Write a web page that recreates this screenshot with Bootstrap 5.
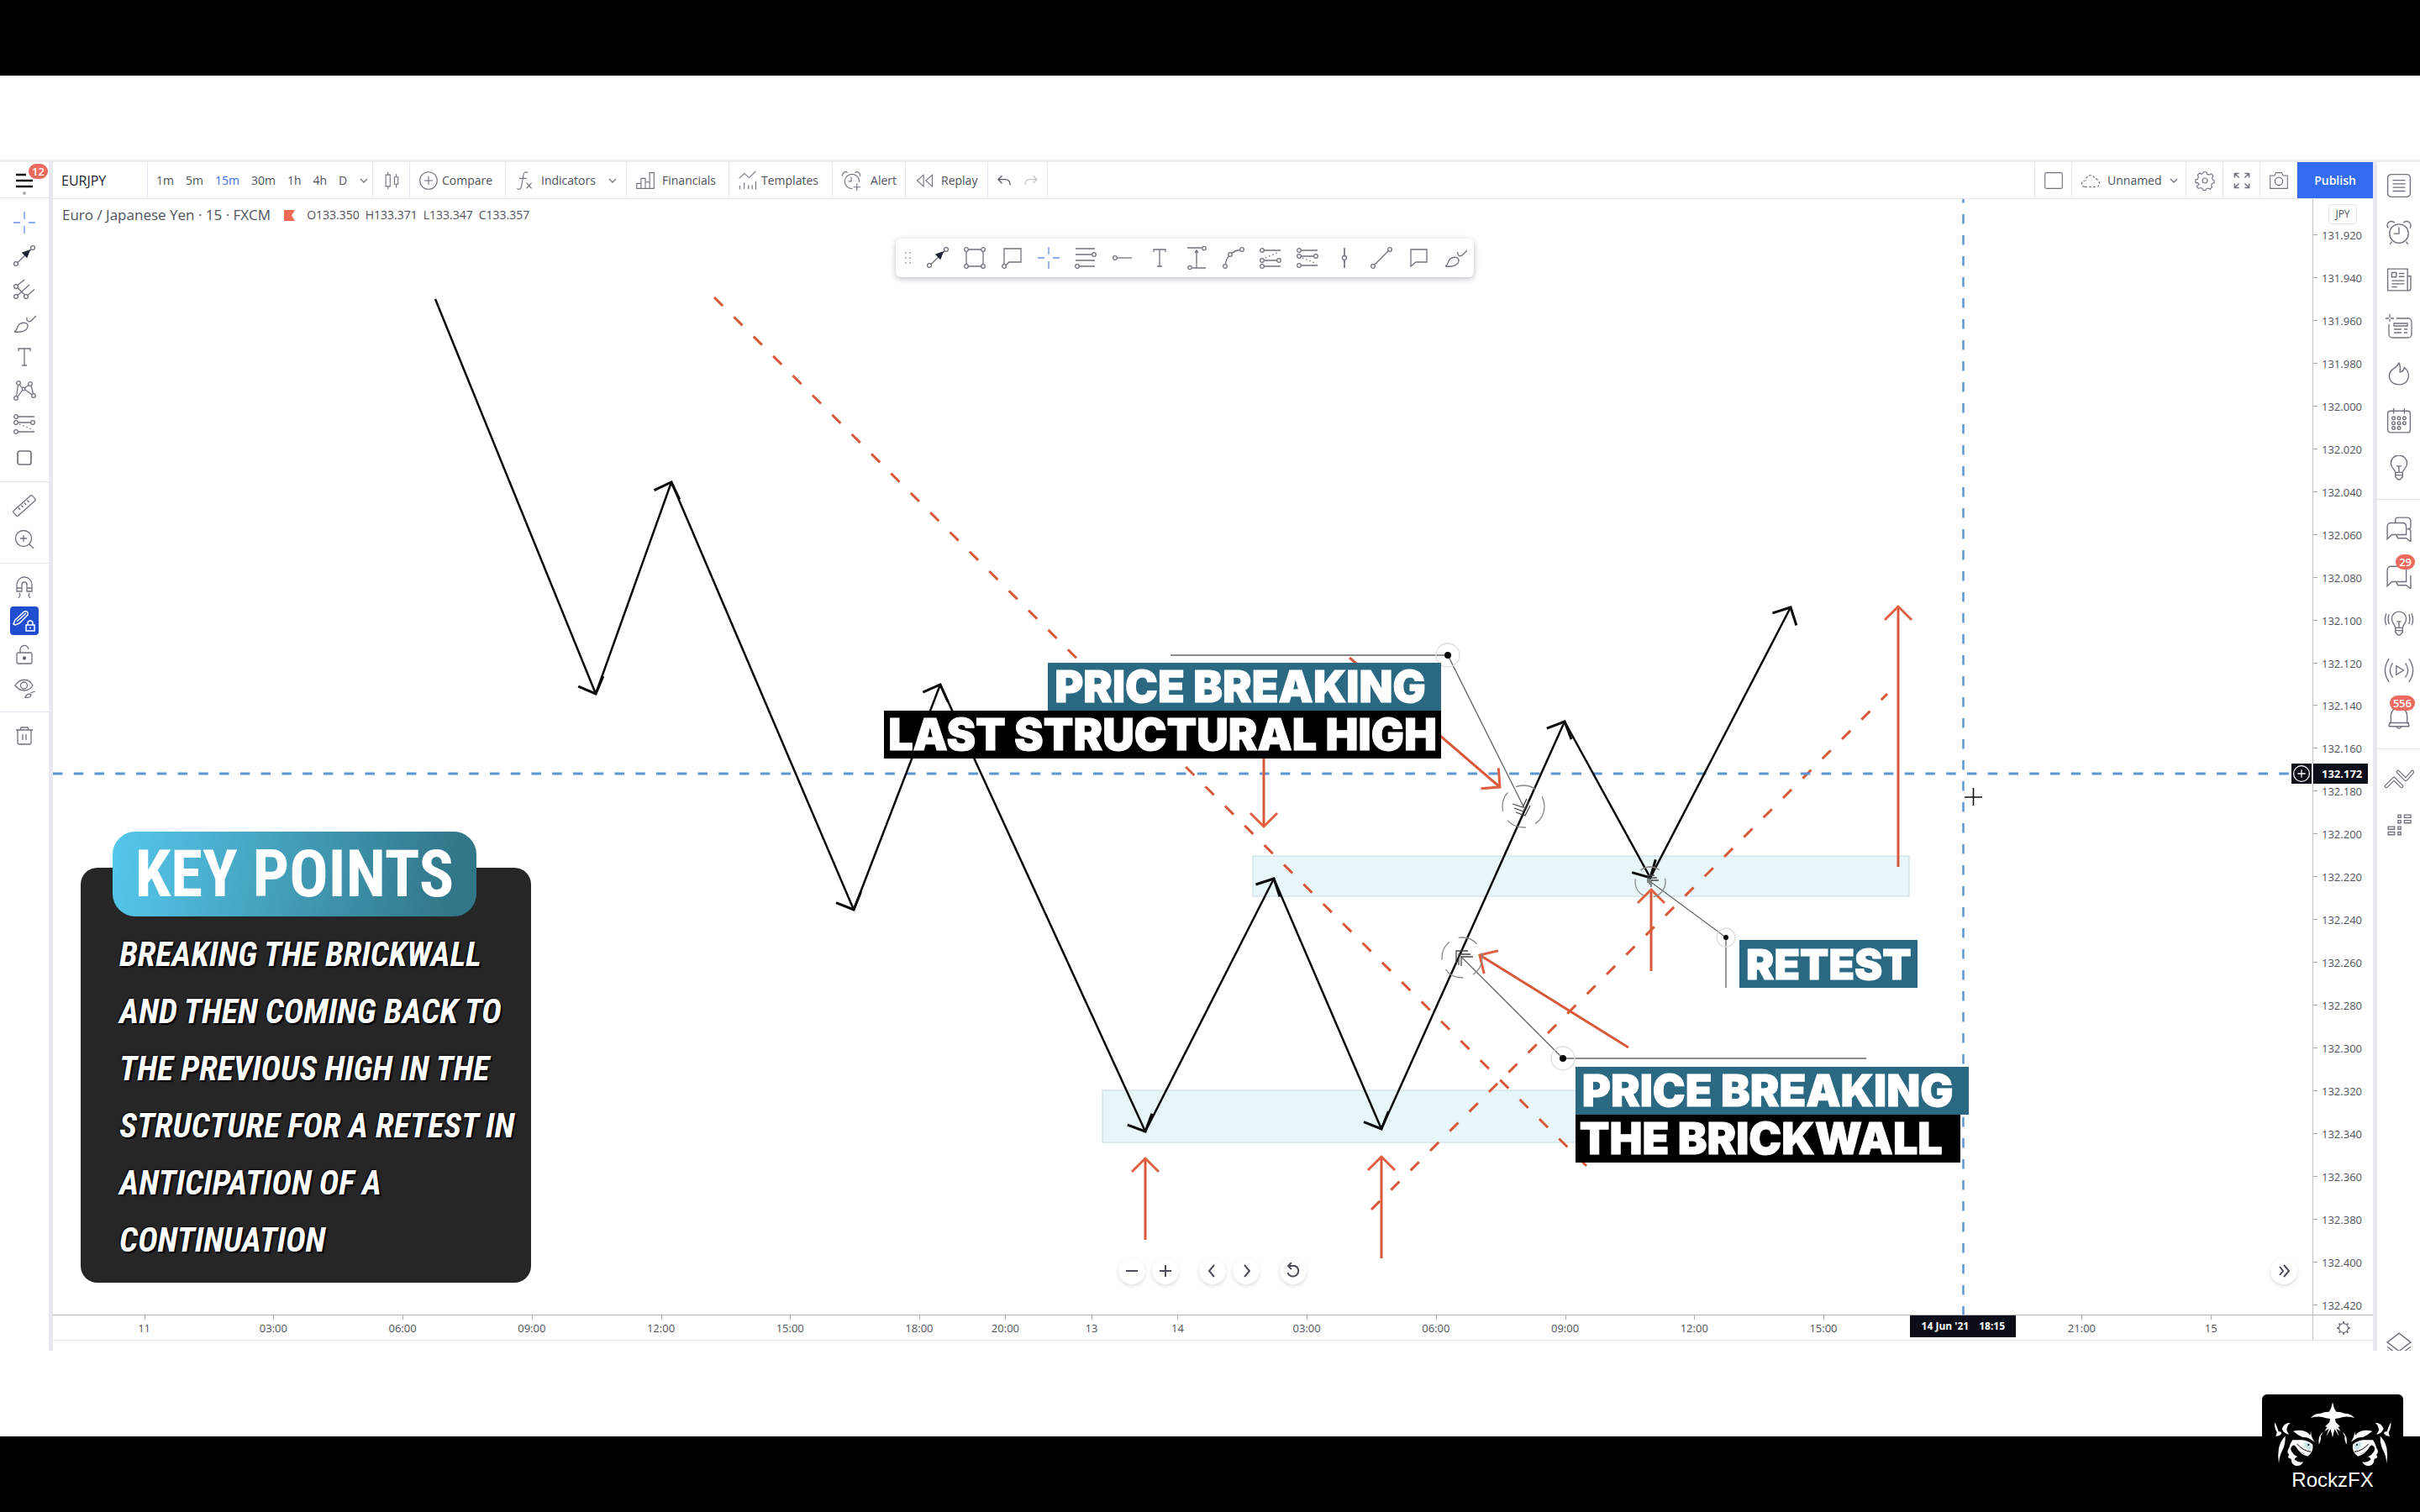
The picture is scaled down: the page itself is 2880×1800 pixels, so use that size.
<!DOCTYPE html>
<html lang="en">
<head>
<meta charset="utf-8">
<meta name="viewport" content="width=device-width, initial-scale=1">
<title>EURJPY chart</title>
<link href="https://cdn.jsdelivr.net/npm/bootstrap@5.3.0/dist/css/bootstrap.min.css" rel="stylesheet">
<style>
:root{--ink:#4f525c;--rule:#e4e5ee;--band:#e7e8f0;--teal:#2b6983;--red:#d9583a}
body{font-family:"Open Sans","Noto Sans",sans-serif;font-size:14px;line-height:20px;color:var(--ink);background:#fff;overflow:hidden}
button{font:inherit;color:inherit;background:none;border:0;padding:0}
svg{display:block}
.letterbox{height:90px;background:#000}
.stage{padding:100px 0 102px;min-height:0}
.platform{border-top:3px solid #ececf1;min-height:0}
.ic{width:28px;height:28px;fill:none;stroke:#70737d;stroke-width:1.3;flex:none}
.tools{width:63px;border-right:5px solid var(--band)}
.menu-btn{height:43px;border-bottom:1px solid var(--rule)}
.menu-btn .count{left:34px;top:2px}
.tools .toolset{padding:8px 0;border-bottom:1px solid var(--rule)}
.tools .toolset:first-of-type{padding-top:9px}
.tools .toolset:last-child{border:0}
.tool{height:40px}
.tool.active .ic{background:#1f4fd0;border-radius:4px;stroke:#fff;width:34px;height:34px;padding:3px}
.count{position:absolute;background:#ec6a5e;color:#fff;font-size:13px;font-weight:600;line-height:18px;height:18px;border-radius:9px;padding:0 4px}
.topbar{height:44px;border-bottom:1px solid var(--rule)}
.seg{border-right:1px solid var(--rule);padding:0 10px;white-space:nowrap}
.seg .ic{width:24px;height:24px}
.seg .chev,.chev{width:12px;height:12px}
.seg .undo{width:18px}
.w-sym{width:113px;color:#22252e;font-size:16px}.w-int{width:268px;gap:14px}.w-sm{width:44px}
.w-cmp{width:114px}.w-ind{width:144px}.w-fin{width:122px}.w-tpl{width:123px}.w-alr{width:87px}.w-rep{width:98px}.w-und{width:71px}.w-lay{width:136px}
.on{color:#3b6cf0}
.pub{width:90px;background:#346bf3;color:#fff;font-weight:600}
.mainpane,.pane{min-width:0}
.pane{overflow:hidden}
.chartrow{min-height:0}
.drawing{width:100%;height:100%}
.legend{position:absolute;left:11px;top:8px;font-size:17px;line-height:22px}
.legend .ohlc{font-size:14px;gap:7px;margin-left:14px}
.floatbar{position:absolute;left:37.3%;top:47px;height:46px;background:#fff;border-radius:6px;box-shadow:0 2px 7px rgba(60,60,80,.32)}
.floatbar .grip{width:28px}
.floatbar button{width:44px;height:46px}
.pricecol{width:72px;border-left:1px solid #bfc0c6;font-size:13px;line-height:18px;padding:6px 0 2px}
.chip{width:34px;height:24px;border:1px solid #e6e6ec;border-radius:4px;font-size:12px;line-height:22px;margin-left:18px;margin-bottom:4px}
.px{padding-left:10px;position:relative}
.px::before{content:"";position:absolute;left:0;top:8px;width:5px;height:1px;background:#a9abb3}
.pricetag{position:absolute;left:0;top:672px;width:65px;height:24px;line-height:24px;background:#0b0e18;color:#fff;font-weight:700;padding-left:10px;font-size:13px}
.plusbtn{position:absolute;right:1px;top:672px;width:24px;height:24px;background:#0b0e18}
.plusbtn .ic{width:22px;height:22px;stroke:#fff;stroke-width:1.6}
.timerow{height:31px;border-top:1px solid #b4b5bb;border-bottom:1px solid #e8e8ee;font-size:13px}
.gearcell{width:72px;border-left:1px solid #bfc0c6}
.gearcell .ic{width:18px}
.t3{flex:150 1 0}.t2{flex:100 1 0}.t0{flex:106 1 0}.t1{flex:118 1 0}
.tk{position:relative;padding-top:5px;min-width:0}
.tk::before{content:"";position:absolute;left:0;top:0;width:1px;height:5px;background:#a9abb3}
.tk span{width:0;display:flex;justify-content:center;white-space:nowrap}
.timetag{position:absolute;left:82.2%;top:0;width:126px;height:26px;line-height:26px;background:#0b0e18;color:#fff;font-weight:700;font-size:12px;gap:12px}
.foot{height:12px}
.side{width:56px;border-left:5px solid var(--band);overflow:hidden}
.side .slot{height:56px}
.side .ic{width:30px;height:30px}
.side .ic.wide{width:36px}
.side .grp{border-bottom:1px solid var(--rule);padding-bottom:9px;margin-bottom:7px}
.side .count{right:6px;top:2px}
.layers{height:23px;overflow:hidden}
.callout{position:absolute;font-family:Inter,"Open Sans",sans-serif;font-weight:900;color:#fff;white-space:nowrap;font-size:52px;-webkit-text-stroke:1px #fff}
.callout div{height:57px;line-height:58px;padding:0 8px}
.callout .bg-black{padding:0 5px}
.callout .w3{font-size:50px}
.bg-teal{background:var(--teal)}
.c1{right:38.56%;top:41.6%}.c2{left:74.64%;top:66.45%}.c3{left:67.38%;top:77.75%}
.w1{width:468px}.w2{width:663px}.w3{width:212px}.w4{width:458px}
.keycard{position:absolute;left:1.23%;top:56.7%;width:536px;padding-top:43px}
.keycard h2{position:absolute;left:38px;top:0;width:433px;height:101px;line-height:102px;border-radius:27px;margin:0;color:#fff;font-size:77px;font-weight:700;white-space:nowrap;background:linear-gradient(100deg,#55c8ec,#317789 92%)}
.cond{font-family:"Roboto Condensed",Roboto,sans-serif}
.keycard p{margin:0;background:#262626;border-radius:20px;padding:70px 20px 16px 46px;color:#fff;font-size:40px;line-height:68px;font-weight:700;font-style:italic;text-shadow:2px 2px 1px #000,-1px -1px 1px #000;white-space:nowrap}
.nav-round{position:absolute;left:47.15%;bottom:36px}
.rnd{width:32px;height:32px;border-radius:50%;background:#fff;box-shadow:0 2px 4px rgba(80,80,110,.2)}
.rnd .ic{width:20px;height:20px;stroke:#4b4e58;stroke-width:2}
.goend{position:absolute;right:18px;bottom:36px}
.brand{position:absolute;right:20px;bottom:0;width:168px;height:140px;background:#000;border-radius:6px 6px 0 0;color:#fff;font:24px/28px "Liberation Sans",sans-serif;padding-top:8px}
</style>
<script src="https://cdn.jsdelivr.net/npm/bootstrap@5.3.0/dist/js/bootstrap.bundle.min.js"></script>
</head>
<body class="vh-100 d-flex flex-column position-relative">

<svg width="0" height="0" class="position-absolute">
<defs>
<symbol id="cross" viewBox="0 0 28 28"><path stroke="#6b90e6" d="M1 14h8M19 14h8M14 1v9M14 18v9"/></symbol>
<symbol id="arrowline" viewBox="0 0 28 28"><circle cx="4" cy="23" r="2.4"/><circle cx="24" cy="4" r="2.4"/><path d="M6 21.500L22 6"/><path fill="#1d2333" stroke="#1d2333" d="M20 7l-3 8-5-5z"/></symbol>
<symbol id="fork" viewBox="0 0 28 28"><circle cx="4" cy="10" r="2.400"/><circle cx="4" cy="22" r="2.400"/><circle cx="16" cy="22" r="2.400"/><path d="M6 8.500L14 2M6 20.500L20 8M18 20.500l8-7M6 12l8.500 8"/></symbol>
<symbol id="brush" viewBox="0 0 28 28"><path d="M2 24c4-1 2-5 6-9 4-3 10-2 10 2 0 6-8 8-16 7zM17 7c-1 5 3 6 6 3l5-5"/></symbol>
<symbol id="text" viewBox="0 0 28 28"><path d="M7 7V4h14v3M14 4v20M11 24h6"/></symbol>
<symbol id="pattern" viewBox="0 0 28 28"><circle cx="7" cy="5" r="2.300"/><circle cx="21" cy="6" r="2.300"/><circle cx="4" cy="23" r="2.300"/><circle cx="25" cy="20" r="2.300"/><circle cx="13" cy="12" r="1.800"/><path d="M6.500 7.500L4.500 20.500M8 7l4 4M6 21.500L12 13M14.500 11L19 7.500M15 13l8 6M22 8.500l2.500 9"/></symbol>
<symbol id="fib" viewBox="0 0 28 28"><circle cx="4" cy="5" r="2.300"/><circle cx="4" cy="12" r="2.300"/><circle cx="24" cy="12" r="2.300"/><circle cx="4" cy="23" r="2.300"/><path d="M6.500 5H26M6.500 12H21.500M6.500 23H26"/><path stroke-dasharray="1.500 3" d="M8 14l17 7"/></symbol>
<symbol id="fib2" viewBox="0 0 28 28"><circle cx="4" cy="5" r="2.300"/><circle cx="4" cy="17" r="2.300"/><circle cx="24" cy="17" r="2.300"/><circle cx="4" cy="24" r="2.300"/><path d="M6.500 5H26M6.500 17H21.500M6.500 24H26"/><path stroke-dasharray="1.500 3" d="M8 14l16-7"/></symbol>
<symbol id="rect" viewBox="0 0 28 28"><rect x="6" y="6" width="16" height="16" rx="2.500" stroke-width="1.700"/></symbol>
<symbol id="ruler" viewBox="0 0 28 28"><rect x="-1" y="10" width="30" height="8" rx="1.500" transform="rotate(-42 14 14)"/><path d="M7 16.500l2 2.500M10.500 13.500l2 2.500M14 10.500l2 2.500M17.500 7.500l2 2.500"/></symbol>
<symbol id="zoomin" viewBox="0 0 28 28"><circle cx="13" cy="13" r="9.500"/><path d="M9 13h8M13 9v8M20 20l5 5"/></symbol>
<symbol id="magnet" viewBox="0 0 28 28"><path d="M5 19V11a9 9 0 0 1 18 0v8h-6v-8a3 3 0 0 0-6 0v8zM5 15h6M17 15h6M8 21l1 3-2 3M20 21l-1 3 2 3"/></symbol>
<symbol id="penlock" viewBox="0 0 28 28"><path d="M3 13L14 3a3 3 0 0 1 4 4L8 17l-5 2-2-1zM5 15l11-10M16 19h10v7H16zM18 19v-2a3 3 0 0 1 6 0v2M21 21.500v2" stroke-width="1.500"/></symbol>
<symbol id="unlock" viewBox="0 0 28 28"><rect x="5" y="12" width="18" height="13" rx="2"/><path d="M9 12V9a5 5 0 0 1 10-1"/><circle cx="14" cy="18.500" r="1.500" fill="#333"/></symbol>
<symbol id="eye" viewBox="0 0 28 28"><path d="M3 11c6-9 16-9 21 0-5 8-15 8-21 0zM15 25c1-3 4-5 7-3 0 3-3 4-7 3zM21 20l6-2"/><circle cx="13.500" cy="11" r="4"/></symbol>
<symbol id="trash" viewBox="0 0 28 28"><path d="M4 7h20M9 7l1-3h8l1 3M6 7v15a2 2 0 0 0 2 2h12a2 2 0 0 0 2-2V7M12 12v7M16 12v7"/></symbol>
<symbol id="box4" viewBox="0 0 28 28"><path d="M4 6v16M24 6v16M6.500 4h15M6.500 24h15"/><circle cx="4" cy="4" r="2.300"/><circle cx="24" cy="4" r="2.300"/><circle cx="4" cy="24" r="2.300"/><circle cx="24" cy="24" r="2.300"/></symbol>
<symbol id="note" viewBox="0 0 28 28"><path d="M5 21.500V3h20v16H11l-4 4"/><circle cx="5" cy="24" r="2.300"/></symbol>
<symbol id="lines4" viewBox="0 0 28 28"><path d="M2 3h23M2 10h19M2 17h23M6 24h19"/><circle cx="24" cy="10" r="2.300"/><circle cx="4" cy="24" r="2.300"/></symbol>
<symbol id="ray" viewBox="0 0 28 28"><circle cx="5" cy="14" r="2.300"/><path d="M7.500 14H25"/></symbol>
<symbol id="measure" viewBox="0 0 28 28"><path d="M3 2h17M9 26h16M14 6v20M12 8l2-3 2 3"/><circle cx="23" cy="2.500" r="2.200"/><circle cx="6" cy="25.500" r="2.200"/></symbol>
<symbol id="curve" viewBox="0 0 28 28"><circle cx="4" cy="24" r="2.300"/><circle cx="10" cy="10" r="2.300"/><circle cx="24" cy="4" r="2.300"/><path d="M4.500 21.500Q5 15 9 12M12 8.500Q16 5 21.500 4.500"/></symbol>
<symbol id="vline" viewBox="0 0 28 28"><circle cx="14" cy="14" r="2.500"/><path stroke-width="1.700" d="M14 2v9.500M14 16.500V26"/></symbol>
<symbol id="trend" viewBox="0 0 28 28"><circle cx="4" cy="24" r="2.300"/><circle cx="24" cy="4" r="2.300"/><path d="M6 22L22 6"/></symbol>
<symbol id="bubble" viewBox="0 0 28 28"><path d="M5 24V4h19v15H11z"/></symbol>
<symbol id="chevd" viewBox="0 0 12 12"><path d="M2 4l4 4 4-4"/></symbol>
<symbol id="candles" viewBox="0 0 28 28"><path d="M6 6h6v16H6zM9 2v4M9 22v4M18 9h5v10h-5zM20.500 5v4M20.500 19v5"/></symbol>
<symbol id="pluscircle" viewBox="0 0 28 28"><circle cx="14" cy="14" r="12"/><path d="M8 14h12M14 8v12"/></symbol>
<symbol id="fx" viewBox="0 0 28 28"><path d="M19 3c-4-2-6 0-6.500 4L10 22c-.5 4-3 5-6 3M7 11h10M17 17l7 8M24 17l-7 8"/></symbol>
<symbol id="bars" viewBox="0 0 28 28"><path d="M2 25v-7h6v7zM8 25V11h6v14zM14 25v-9h6v9M20 25V3h6v22H14"/></symbol>
<symbol id="tpl" viewBox="0 0 28 28"><path d="M2 11l7-7 7 6 9-9M3 21v5M9 17v9M15 20v6M20 20v6M25 15v11"/></symbol>
<symbol id="alertp" viewBox="0 0 28 28"><path d="M16 25a10 10 0 1 1 9-9M14 9v6h-4M2 8a4.500 4.500 0 0 1 7-5M26 8a4.500 4.500 0 0 0-7-5M22 18v10M17 23h10"/></symbol>
<symbol id="clock" viewBox="0 0 28 28"><circle cx="14" cy="15" r="10.500"/><path d="M14 8v7H8M2 9a4.500 4.500 0 0 1 7-6M26 9a4.500 4.500 0 0 0-7-6M6 24l-2 3M22 24l2 3"/></symbol>
<symbol id="replay" viewBox="0 0 28 28"><path d="M13 6v16L4 14zM25 6v16l-9-8z"/></symbol>
<symbol id="undo" viewBox="0 0 28 28"><path stroke="#555862" stroke-width="2" d="M10 5L3 12l7 7M3 12h13q9 0 9 10"/></symbol>
<symbol id="redo" viewBox="0 0 28 28"><path stroke="#c4c5cb" stroke-width="2" d="M18 5l7 7-7 7M25 12H12q-9 0-9 10"/></symbol>
<symbol id="square" viewBox="0 0 28 28"><rect x="2" y="3" width="24" height="22" rx="2"/></symbol>
<symbol id="cloud" viewBox="0 0 32 28"><path stroke-width="1.600" stroke-dasharray="4 2.500" d="M7 24c-7-1-7-10 1-10C9 4 20 3 23 11c8 1 10 12 2 13z"/></symbol>
<symbol id="gear" viewBox="0 0 28 28"><circle cx="14" cy="14" r="3.500"/><path d="M12 2h4l1 3 3 1 3-1.500 2.500 3L24 10.500l1 2.500 2 1v3l-3 1-1 2.500 1 3-3 2.500-2.500-1.500-2.500 1-1 2h-3l-1.500-2.500-2.500-1-3 1-2.500-3L6 19.500 4 17H1v-4l3-1 1-3-1-3 3-2.500L9 5l2-1z"/></symbol>
<symbol id="expand" viewBox="0 0 28 28"><path stroke-width="1.800" d="M4 10V4h6M4 4l6 6M18 4h6v6M24 4l-6 6M4 18v6h6M4 24l6-6M24 18v6h-6M24 24l-6-6"/></symbol>
<symbol id="camera" viewBox="0 0 28 28"><path d="M2 7h6l2-4h8l2 4h6v18H2z"/><circle cx="14" cy="15" r="5.500"/></symbol>
<symbol id="list" viewBox="0 0 28 28"><rect x="1.500" y="1.500" width="25" height="25" rx="4"/><path d="M7 8h14M7 12h14M7 16h14M7 20h14"/></symbol>
<symbol id="news" viewBox="0 0 28 28"><path d="M1.500 2h22v24h-22zM23.500 10H27v14q0 2-3 2M6 6h5v5H6zM14 7h6M14 10.500h6M6 15h14M6 18.500h14M6 22h6"/></symbol>
<symbol id="datawin" viewBox="-4 -1 32 30"><path d="M9 4h14a4 4 0 0 1 4 4v15a4 4 0 0 1-4 4H4a4 4 0 0 1-4-4V11M-4 4h4M2 4h4M1-1v4M1 5v3M6 10h16v3H6zM6 17h9M18 17h4M6 21h9M18 21h4"/></symbol>
<symbol id="fire" viewBox="0 0 28 28"><path d="M14 2q2 4 1 10 4 0 5-5c8 7 5 18-5 19C3 26 0 15 7 9q5-3 7-7z"/></symbol>
<symbol id="cal" viewBox="0 0 28 28"><rect x="1.500" y="3" width="25" height="24" rx="3"/><path d="M8 0v6M20 0v6"/><g><circle cx="8" cy="11" r="1.700"/><circle cx="14" cy="11" r="1.700"/><circle cx="20" cy="11" r="1.700"/><circle cx="8" cy="16.500" r="1.700"/><circle cx="14" cy="16.500" r="1.700"/><circle cx="20" cy="16.500" r="1.700"/><circle cx="8" cy="22" r="1.700"/><circle cx="14" cy="22" r="1.700"/></g></symbol>
<symbol id="bulb" viewBox="0 0 28 28"><path d="M10 19c0-3-5-5-5-10a9 9 0 0 1 18 0c0 5-5 7-5 10zM14 19v-7M11 12h6M10 22h8M10 19v5l3 3h2l3-3v-5"/></symbol>
<symbol id="bulbsig" viewBox="0 0 32 28"><path d="M12 19c0-3-4-5-4-10a8 8 0 0 1 16 0c0 5-4 7-4 10zM16 19v-7M13.500 12h5M12 22h8M12 19v5l3 3h2l3-3v-5M5 4q-2 5 0 11M2 3q-3 7 0 13M27 4q2 5 0 11M30 3q3 7 0 13"/></symbol>
<symbol id="chats" viewBox="0 0 28 28"><path d="M1 25V11a4 4 0 0 1 4-4h13q4 0 4 4v9H6zM10 7V4q0-3 3-3h10q4 0 4 4v7q0 2-4 2M24 13q3 1 3 4v11l-5-4h-9l-2-3"/></symbol>
<symbol id="chat1" viewBox="0 0 28 28"><path d="M1 25V7a4 4 0 0 1 4-4h13q4 0 4 4v13H6zM27 13v15l-5-4h-9l-2-3"/></symbol>
<symbol id="stream" viewBox="0 0 32 28"><path d="M13 9v10l8-5zM9 6q-6 8 0 16M5 1q-9 13 0 26M23 6q6 8 0 16M27 1q9 13 0 26"/></symbol>
<symbol id="bell" viewBox="0 0 28 28"><path d="M5 20V12a9 9 0 0 1 18 0v8l2 2v2H3v-2zM3 20h22M11 24q3 5 6 0"/></symbol>
<symbol id="zigzag" viewBox="0 0 36 28"><g stroke-linecap="round" stroke-linejoin="round"><path d="M3 23l9-9 9 9M17 6l9 9 8-9" stroke-width="4.500"/><path d="M3 23l9-9 9 9M17 6l9 9 8-9" stroke="#fff" stroke-width="2"/></g></symbol>
<symbol id="dots" viewBox="0 0 28 28"><path d="M13 2h3v3h-3zM20 2h7v3h-7zM13 8h3v3h-3zM20 8h7v3h-7zM2 15h7v3H2zM13 15h3v3h-3zM2 21h7v3H2zM13 21h3v3h-3z"/></symbol>
<symbol id="layers" viewBox="0 0 28 28"><path d="M14 2l13 10-13 10L1 12zM1 17l13 10 13-10M1 21l13 10 13-10"/></symbol>
<symbol id="minus" viewBox="0 0 20 20"><path d="M3 10h14"/></symbol>
<symbol id="plus" viewBox="0 0 20 20"><path d="M3 10h14M10 3v14"/></symbol>
<symbol id="lt" viewBox="0 0 20 20"><path d="M12 3l-6 7 6 7"/></symbol>
<symbol id="gt" viewBox="0 0 20 20"><path d="M8 3l6 7-6 7"/></symbol>
<symbol id="gtgt" viewBox="0 0 20 20"><path d="M5 5l4 5-4 5M10 3l6 7-6 7"/></symbol>
<symbol id="reset" viewBox="0 0 20 20"><path d="M5 4h7a6.500 6.500 0 1 1-8.500 8M8 0L4 4l4 4"/></symbol>
<symbol id="sun" viewBox="0 0 28 28"><circle cx="14" cy="14" r="8.500" stroke-width="2"/><path stroke-width="3" d="M14 2v4M14 22v4M2 14h4M22 14h4M5.500 5.500L8 8M20 20l2.500 2.500M5.500 22.500L8 20M20 8l2.500-2.500"/></symbol>
<marker id="mk" viewBox="-20 -20 24 40" refX="0" refY="0" markerWidth="24" markerHeight="40" markerUnits="userSpaceOnUse" orient="auto"><path d="M-16-16L0 0-16 16" fill="none" stroke="#0a0a0a" stroke-width="3"/></marker>
<marker id="mr" viewBox="-20 -20 24 40" refX="0" refY="0" markerWidth="24" markerHeight="40" markerUnits="userSpaceOnUse" orient="auto"><path d="M-16-16L0 0-16 16" fill="none" stroke="#e0603f" stroke-width="3"/></marker>
</defs>
</svg>

<div class="letterbox flex-shrink-0"></div>

<div class="stage flex-grow-1 d-flex">
<div class="platform flex-grow-1 d-flex">

  <nav class="tools d-flex flex-column flex-shrink-0" aria-label="Drawing tools">
    <button class="menu-btn position-relative flex-shrink-0" aria-label="Menu">
      <svg width="58" height="42" viewBox="0 0 58 42"><path d="M19 15h12M19 22h20M19 29h20" stroke="#111" stroke-width="2.500"/><circle cx="29" cy="37" r="2" fill="#aaa"/></svg>
      <span class="count">12</span>
    </button>
    <div class="toolset d-flex flex-column">
      <button class="tool d-flex align-items-center justify-content-center" aria-label="Crosshair"><svg class="ic"><use href="#cross"/></svg></button>
      <button class="tool d-flex align-items-center justify-content-center" aria-label="Arrow"><svg class="ic"><use href="#arrowline"/></svg></button>
      <button class="tool d-flex align-items-center justify-content-center" aria-label="Pitchfork"><svg class="ic"><use href="#fork"/></svg></button>
      <button class="tool d-flex align-items-center justify-content-center" aria-label="Brush"><svg class="ic"><use href="#brush"/></svg></button>
      <button class="tool d-flex align-items-center justify-content-center" aria-label="Text"><svg class="ic"><use href="#text"/></svg></button>
      <button class="tool d-flex align-items-center justify-content-center" aria-label="Pattern"><svg class="ic"><use href="#pattern"/></svg></button>
      <button class="tool d-flex align-items-center justify-content-center" aria-label="Position"><svg class="ic"><use href="#fib"/></svg></button>
      <button class="tool d-flex align-items-center justify-content-center" aria-label="Shape"><svg class="ic"><use href="#rect"/></svg></button>
    </div>
    <div class="toolset d-flex flex-column">
      <button class="tool d-flex align-items-center justify-content-center" aria-label="Measure"><svg class="ic"><use href="#ruler"/></svg></button>
      <button class="tool d-flex align-items-center justify-content-center" aria-label="Zoom in"><svg class="ic"><use href="#zoomin"/></svg></button>
    </div>
    <div class="toolset d-flex flex-column">
      <button class="tool d-flex align-items-center justify-content-center" aria-label="Magnet"><svg class="ic"><use href="#magnet"/></svg></button>
      <button class="tool active d-flex align-items-center justify-content-center" aria-label="Stay in drawing mode"><svg class="ic"><use href="#penlock"/></svg></button>
      <button class="tool d-flex align-items-center justify-content-center" aria-label="Lock"><svg class="ic"><use href="#unlock"/></svg></button>
      <button class="tool d-flex align-items-center justify-content-center" aria-label="Hide"><svg class="ic"><use href="#eye"/></svg></button>
    </div>
    <div class="toolset d-flex flex-column">
      <button class="tool d-flex align-items-center justify-content-center" aria-label="Remove"><svg class="ic"><use href="#trash"/></svg></button>
    </div>
  </nav>

  <main class="mainpane flex-grow-1 d-flex flex-column">
    <div class="topbar d-flex flex-shrink-0">
      <button class="seg w-sym text-start">EURJPY</button>
      <div class="seg w-int d-flex align-items-center">
        <button>1m</button><button>5m</button><button class="on">15m</button><button>30m</button><button>1h</button><button>4h</button><button>D</button><button aria-label="More"><svg class="ic chev"><use href="#chevd"/></svg></button>
      </div>
      <button class="seg w-sm d-flex align-items-center" aria-label="Candles"><svg class="ic"><use href="#candles"/></svg></button>
      <button class="seg w-cmp d-flex align-items-center gap-1"><svg class="ic"><use href="#pluscircle"/></svg>Compare</button>
      <button class="seg w-ind d-flex align-items-center gap-2"><svg class="ic"><use href="#fx"/></svg>Indicators<svg class="ic chev ms-auto"><use href="#chevd"/></svg></button>
      <button class="seg w-fin d-flex align-items-center gap-2"><svg class="ic"><use href="#bars"/></svg>Financials</button>
      <button class="seg w-tpl d-flex align-items-center gap-1"><svg class="ic"><use href="#tpl"/></svg>Templates</button>
      <button class="seg w-alr d-flex align-items-center justify-content-between"><svg class="ic"><use href="#alertp"/></svg>Alert</button>
      <button class="seg w-rep d-flex align-items-center gap-2"><svg class="ic"><use href="#replay"/></svg>Replay</button>
      <div class="seg w-und d-flex align-items-center justify-content-between"><button aria-label="Undo"><svg class="ic undo"><use href="#undo"/></svg></button><button aria-label="Redo"><svg class="ic undo"><use href="#redo"/></svg></button></div>
      <div class="seg flex-grow-1"></div>
      <button class="seg w-sm d-flex align-items-center" aria-label="Layout"><svg class="ic"><use href="#square"/></svg></button>
      <button class="seg w-lay d-flex align-items-center gap-2"><svg class="ic"><use href="#cloud"/></svg>Unnamed<svg class="ic chev ms-auto"><use href="#chevd"/></svg></button>
      <button class="seg w-sm d-flex align-items-center" aria-label="Settings"><svg class="ic"><use href="#gear"/></svg></button>
      <button class="seg w-sm d-flex align-items-center" aria-label="Fullscreen"><svg class="ic"><use href="#expand"/></svg></button>
      <button class="seg w-sm d-flex align-items-center" aria-label="Snapshot"><svg class="ic"><use href="#camera"/></svg></button>
      <button class="pub">Publish</button>
    </div>

    <div class="chartrow d-flex flex-grow-1">
      <div class="pane flex-grow-1 position-relative">
        <svg class="drawing position-absolute" viewBox="63 237 2689 1328" preserveAspectRatio="none">
          <g fill="#e8f5f9" stroke="#c3dce4"><rect x="1491" y="1019" width="781" height="48"/><rect x="1312" y="1298" width="600" height="62"/></g>
          <g stroke="#d9583a" stroke-width="3" stroke-dasharray="14.300 18.700"><path d="M850 354L1888 1388"/><path d="M1632 1440L2246 826"/></g>
          <g stroke="#5d97d2"><path stroke-width="3" stroke-dasharray="11.500 13.260" d="M63 921H2724"/><path stroke-width="2.500" stroke-dasharray="11.500 13.500" d="M2336.500 230V1565"/></g>
          <g stroke="#0a0a0a" stroke-width="2.500">
            <path marker-end="url(#mk)" d="M518 356L709 826"/><path marker-end="url(#mk)" d="M709 826L799 574"/><path marker-end="url(#mk)" d="M799 574L1016 1083"/><path marker-end="url(#mk)" d="M1016 1083L1119 815"/><path marker-end="url(#mk)" d="M1119 815L1363 1347"/><path marker-end="url(#mk)" d="M1363 1347L1516 1046"/><path marker-end="url(#mk)" d="M1516 1046L1644 1344"/><path marker-end="url(#mk)" d="M1644 1344L1862 859"/><path marker-end="url(#mk)" d="M1862 859L1964 1045"/><path marker-end="url(#mk)" d="M1964 1045L2131 723"/>
          </g>
          <g stroke="#d9583a" stroke-width="3">
            <path marker-end="url(#mr)" d="M1363 1476V1379"/><path marker-end="url(#mr)" d="M1644 1498V1377"/><path marker-end="url(#mr)" d="M1965 1156V1059"/><path marker-end="url(#mr)" d="M2259 1032V722"/><path marker-end="url(#mr)" d="M1504 890V984"/><path marker-end="url(#mr)" d="M1606 783L1785 937"/><path marker-end="url(#mr)" d="M1938 1247L1761 1137"/>
          </g>
          <g fill="none" stroke="#666" stroke-width="1.300">
            <path d="M1393 780H1723L1814 962M2221 1260H1860L1739 1139M2054 1176V1116L1966 1051"/>
            <g stroke="#888" stroke-dasharray="24 12"><circle cx="1813" cy="960" r="25"/><circle cx="1740" cy="1140" r="24"/><circle cx="1964" cy="1050" r="18"/></g>
            <g stroke="#ddd"><circle cx="1723" cy="780" r="14"/><circle cx="1860" cy="1260" r="14"/><circle cx="2054" cy="1116" r="11"/></g>
            <g stroke="#444"><path d="M1800 957l12 4 5-10M1802 962l11 4 6-12M1804 967l11 4 6-12"/><path d="M1753 1139h-14v11M1750 1136h-14v13M1747 1132h-14v14"/><path d="M1974 1048h-9v8M1972 1045h-9v8M1969 1042h-8v9"/></g>
          </g>
          <g fill="#0a0a0a"><circle cx="1723" cy="780" r="4"/><circle cx="1860" cy="1260" r="4"/><circle cx="2054" cy="1116" r="3"/></g>
          <path d="M2338 949h21M2348.500 938v21" stroke="#111" stroke-width="1.600"/>
        </svg>

        <div class="legend d-flex align-items-center">
          <span>Euro / Japanese Yen · 15 · FXCM</span>
          <svg class="ms-3" width="13" height="13" viewBox="0 0 13 13"><path d="M0 0h13L9 6.500 13 13H0z" fill="#ee6a55"/></svg>
          <span class="ohlc d-flex"><span>O133.350</span><span>H133.371</span><span>L133.347</span><span>C133.357</span></span>
        </div>

        <div class="floatbar d-flex align-items-center">
          <svg class="grip" height="20" viewBox="0 0 28 20" fill="#b9bac2"><path d="M11 3h2v2h-2zM16 3h2v2h-2zM11 9h2v2h-2zM16 9h2v2h-2zM11 15h2v2h-2zM16 15h2v2h-2z"/></svg>
          <button class="d-flex align-items-center justify-content-center" aria-label="Arrow"><svg class="ic"><use href="#arrowline"/></svg></button>
          <button class="d-flex align-items-center justify-content-center" aria-label="Rectangle"><svg class="ic"><use href="#box4"/></svg></button>
          <button class="d-flex align-items-center justify-content-center" aria-label="Callout"><svg class="ic"><use href="#note"/></svg></button>
          <button class="d-flex align-items-center justify-content-center" aria-label="Crosshair"><svg class="ic"><use href="#cross"/></svg></button>
          <button class="d-flex align-items-center justify-content-center" aria-label="Fib retracement"><svg class="ic"><use href="#lines4"/></svg></button>
          <button class="d-flex align-items-center justify-content-center" aria-label="Ray"><svg class="ic"><use href="#ray"/></svg></button>
          <button class="d-flex align-items-center justify-content-center" aria-label="Text"><svg class="ic"><use href="#text"/></svg></button>
          <button class="d-flex align-items-center justify-content-center" aria-label="Price range"><svg class="ic"><use href="#measure"/></svg></button>
          <button class="d-flex align-items-center justify-content-center" aria-label="Curve"><svg class="ic"><use href="#curve"/></svg></button>
          <button class="d-flex align-items-center justify-content-center" aria-label="Long position"><svg class="ic"><use href="#fib2"/></svg></button>
          <button class="d-flex align-items-center justify-content-center" aria-label="Short position"><svg class="ic"><use href="#fib"/></svg></button>
          <button class="d-flex align-items-center justify-content-center" aria-label="Vertical line"><svg class="ic"><use href="#vline"/></svg></button>
          <button class="d-flex align-items-center justify-content-center" aria-label="Trend line"><svg class="ic"><use href="#trend"/></svg></button>
          <button class="d-flex align-items-center justify-content-center" aria-label="Balloon"><svg class="ic"><use href="#bubble"/></svg></button>
          <button class="d-flex align-items-center justify-content-center" aria-label="Brush"><svg class="ic"><use href="#brush"/></svg></button>
        </div>

        <div class="callout c1 d-flex flex-column align-items-end"><div class="bg-teal w1">PRICE BREAKING</div><div class="bg-black w2">LAST STRUCTURAL HIGH</div></div>
        <div class="callout c2"><div class="bg-teal w3">RETEST</div></div>
        <div class="callout c3"><div class="bg-teal w1">PRICE BREAKING</div><div class="bg-black w4">THE BRICKWALL</div></div>

        <section class="keycard cond">
          <p>BREAKING THE BRICKWALL<br>AND THEN COMING BACK TO<br>THE PREVIOUS HIGH IN THE<br>STRUCTURE FOR A RETEST IN<br>ANTICIPATION OF A<br>CONTINUATION</p>
          <h2 class="text-center">KEY POINTS</h2>
        </section>

        <div class="nav-round d-flex gap-4">
          <div class="d-flex gap-2">
            <button class="rnd d-flex align-items-center justify-content-center" aria-label="Zoom out"><svg class="ic"><use href="#minus"/></svg></button>
            <button class="rnd d-flex align-items-center justify-content-center" aria-label="Zoom in"><svg class="ic"><use href="#plus"/></svg></button>
          </div>
          <div class="d-flex gap-2">
            <button class="rnd d-flex align-items-center justify-content-center" aria-label="Scroll left"><svg class="ic"><use href="#lt"/></svg></button>
            <button class="rnd d-flex align-items-center justify-content-center" aria-label="Scroll right"><svg class="ic"><use href="#gt"/></svg></button>
          </div>
          <button class="rnd d-flex align-items-center justify-content-center" aria-label="Reset"><svg class="ic"><use href="#reset"/></svg></button>
        </div>
        <button class="rnd goend d-flex align-items-center justify-content-center" aria-label="Go to last bar"><svg class="ic"><use href="#gtgt"/></svg></button>
        <button class="plusbtn d-flex align-items-center justify-content-center" aria-label="Add at price"><svg class="ic"><use href="#pluscircle"/></svg></button>
      </div>

      <div class="pricecol position-relative d-flex flex-column justify-content-between flex-shrink-0">
        <div class="chip text-center">JPY</div>
        <div class="d-flex flex-column justify-content-between flex-grow-1">
          <div class="px">131.920</div><div class="px">131.940</div><div class="px">131.960</div><div class="px">131.980</div><div class="px">132.000</div><div class="px">132.020</div><div class="px">132.040</div><div class="px">132.060</div><div class="px">132.080</div><div class="px">132.100</div><div class="px">132.120</div><div class="px">132.140</div><div class="px">132.160</div><div class="px">132.180</div><div class="px">132.200</div><div class="px">132.220</div><div class="px">132.240</div><div class="px">132.260</div><div class="px">132.280</div><div class="px">132.300</div><div class="px">132.320</div><div class="px">132.340</div><div class="px">132.360</div><div class="px">132.380</div><div class="px">132.400</div><div class="px">132.420</div>
        </div>
        <div class="pricetag">132.172</div>
      </div>
    </div>

    <div class="timerow d-flex flex-shrink-0">
      <div class="flex-grow-1 d-flex position-relative">
        <div class="t0"></div>
        <div class="tk t3"><span>11</span></div><div class="tk t3"><span>03:00</span></div><div class="tk t3"><span>06:00</span></div><div class="tk t3"><span>09:00</span></div><div class="tk t3"><span>12:00</span></div><div class="tk t3"><span>15:00</span></div><div class="tk t2"><span>18:00</span></div><div class="tk t2"><span>20:00</span></div><div class="tk t2"><span>13</span></div><div class="tk t3"><span>14</span></div><div class="tk t3"><span>03:00</span></div><div class="tk t3"><span>06:00</span></div><div class="tk t3"><span>09:00</span></div><div class="tk t3"><span>12:00</span></div><div class="tk t3"><span>15:00</span></div><div class="tk t3"></div><div class="tk t3"><span>21:00</span></div><div class="tk t1"><span>15</span></div>
        <div class="timetag d-flex justify-content-center"><span>14 Jun '21</span><span>18:15</span></div>
      </div>
      <button class="gearcell d-flex align-items-center justify-content-center flex-shrink-0" aria-label="Axis settings"><svg class="ic"><use href="#sun"/></svg></button>
    </div>
    <div class="foot flex-shrink-0"></div>
  </main>

  <aside class="side d-flex flex-column flex-shrink-0" aria-label="Panels">
    <div class="grp">
      <button class="slot w-100 d-flex align-items-center justify-content-center" aria-label="Watchlist"><svg class="ic"><use href="#list"/></svg></button>
      <button class="slot w-100 d-flex align-items-center justify-content-center" aria-label="Alerts"><svg class="ic"><use href="#clock"/></svg></button>
      <button class="slot w-100 d-flex align-items-center justify-content-center" aria-label="News"><svg class="ic"><use href="#news"/></svg></button>
      <button class="slot w-100 d-flex align-items-center justify-content-center" aria-label="Data window"><svg class="ic wide"><use href="#datawin"/></svg></button>
      <button class="slot w-100 d-flex align-items-center justify-content-center" aria-label="Hotlists"><svg class="ic"><use href="#fire"/></svg></button>
      <button class="slot w-100 d-flex align-items-center justify-content-center" aria-label="Calendar"><svg class="ic"><use href="#cal"/></svg></button>
      <button class="slot w-100 d-flex align-items-center justify-content-center" aria-label="Ideas"><svg class="ic"><use href="#bulb"/></svg></button>
    </div>
    <div class="grp">
      <button class="slot w-100 d-flex align-items-center justify-content-center" aria-label="Public chats"><svg class="ic"><use href="#chats"/></svg></button>
      <button class="slot w-100 d-flex align-items-center justify-content-center position-relative" aria-label="Private chats"><svg class="ic"><use href="#chat1"/></svg><span class="count">29</span></button>
      <button class="slot w-100 d-flex align-items-center justify-content-center" aria-label="Ideas stream"><svg class="ic wide"><use href="#bulbsig"/></svg></button>
      <button class="slot w-100 d-flex align-items-center justify-content-center" aria-label="Streams"><svg class="ic wide"><use href="#stream"/></svg></button>
      <button class="slot w-100 d-flex align-items-center justify-content-center position-relative" aria-label="Notifications"><svg class="ic"><use href="#bell"/></svg><span class="count">556</span></button>
    </div>
    <button class="slot w-100 d-flex align-items-center justify-content-center" aria-label="Order panel"><svg class="ic wide"><use href="#zigzag"/></svg></button>
    <button class="slot w-100 d-flex align-items-center justify-content-center" aria-label="Depth"><svg class="ic"><use href="#dots"/></svg></button>
    <button class="layers w-100 d-flex justify-content-center mt-auto" aria-label="Object tree"><svg class="ic"><use href="#layers"/></svg></button>
  </aside>
</div>
</div>

<div class="letterbox flex-shrink-0"></div>

<div class="brand d-flex flex-column align-items-center">
  <svg width="144" height="80" viewBox="189 565 432 240" fill="#fff">
    <path d="M405 569l6 22 7 12q16-1 30 6 20-1 36 16-32-9-56 1l-14 2 2 12 16 16-8 1 10 16-16-10 10 28-16-26-7 30-7-30-16 26 10-28-16 10 10-16-8-1 16-16 2-12-14-2q-24-10-56-1 16-17 36-16 14-7 30-6l7-12z"/>
    <g id="tigerhalf">
      <path d="M198 640q10 18 14 34 12-2 10 8-8 10-20 8 4-8 4-14-10-16-8-36zM254 642q-22 0-30 22 8 18 26 20-12-14-8-22 2-12 12-20zM236 690q-16 14-23 42-5 28 0 56 2-28 12-46 12-22 11-52zM264 672q36-8 54 8 14 12 20 30-20-18-40-16-18-8-34-22zM328 672q-2 20 14 40-24-16-14-40z"/>
      <path d="M262 704h34q22 2 38 16 4 26-18 42-28-6-42-34-6-8-12-4-10 8-4 20 8 14 22 20-10 2-10 10 14 12 30 8-6 16-26 14-16-4-16-20 0-6-6-6-10-4-2-14-12-6 0-26 4-16 12-26z"/>
      <path d="M270 726q14 26 42 28-30-6-42-28z" fill="#000"/><path d="M278 718q20 24 50 28" stroke="#000" stroke-width="3" fill="none"/><path d="M302 714q18-4 28 8 2 14-10 18-14-8-18-26z" fill="#c9e4e8"/><circle cx="319" cy="721" r="3" fill="#000"/>
      <path d="M370 676q-18 12-14 44 10-20 6-30 6-6 8-14z"/>
    </g>
    <use href="#tigerhalf" transform="translate(811 0) scale(-1 1)"/>
  </svg>
  <div>RockzFX</div>
</div>
</body>
</html>
